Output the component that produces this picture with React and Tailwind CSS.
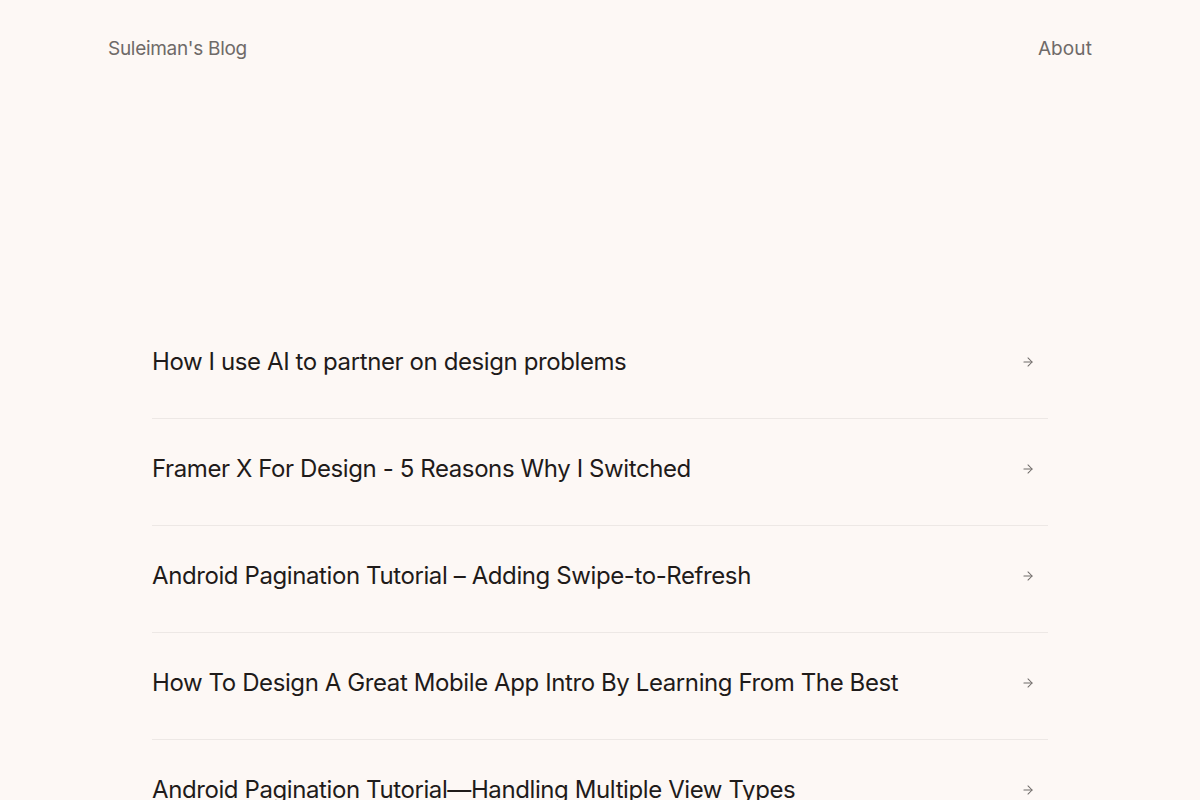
import React from 'react';
import { ArrowRight } from 'lucide-react';

const posts = [
  'How I use AI to partner on design problems',
  'Framer X For Design - 5 Reasons Why I Switched',
  'Android Pagination Tutorial – Adding Swipe-to-Refresh',
  'How To Design A Great Mobile App Intro By Learning From The Best',
  'Android Pagination Tutorial—Handling Multiple View Types',
  'Getting Started With Kotlin Coroutines',
];

const App = () => {
  return (
    <div className="min-h-screen bg-[#fdf8f5] font-['Inter',sans-serif]">
      <header className="max-w-[984px] mx-auto flex justify-between items-center pt-[35px] text-[19px] text-[#6f6a68] tracking-[-0.3px]">
        <a href="#">Suleiman's Blog</a>
        <a href="#" className="tracking-[0.1px]">About</a>
      </header>

      <main className="max-w-[896px] mx-auto mt-[248px]">
        <ul>
          {posts.map((title) => (
            <li key={title} className="border-b border-[#ede8e5]">
              <a href="#" className="flex items-center justify-between pt-[36px] pb-[42px] pr-[13px]">
                <span className="text-[24px] leading-[28px] text-[#1f1b1a] tracking-[-0.4px]">{title}</span>
                <ArrowRight size={14} strokeWidth={1.75} className="text-[#6f6a68]" />
              </a>
            </li>
          ))}
        </ul>
      </main>
    </div>
  );
};

export default App;
